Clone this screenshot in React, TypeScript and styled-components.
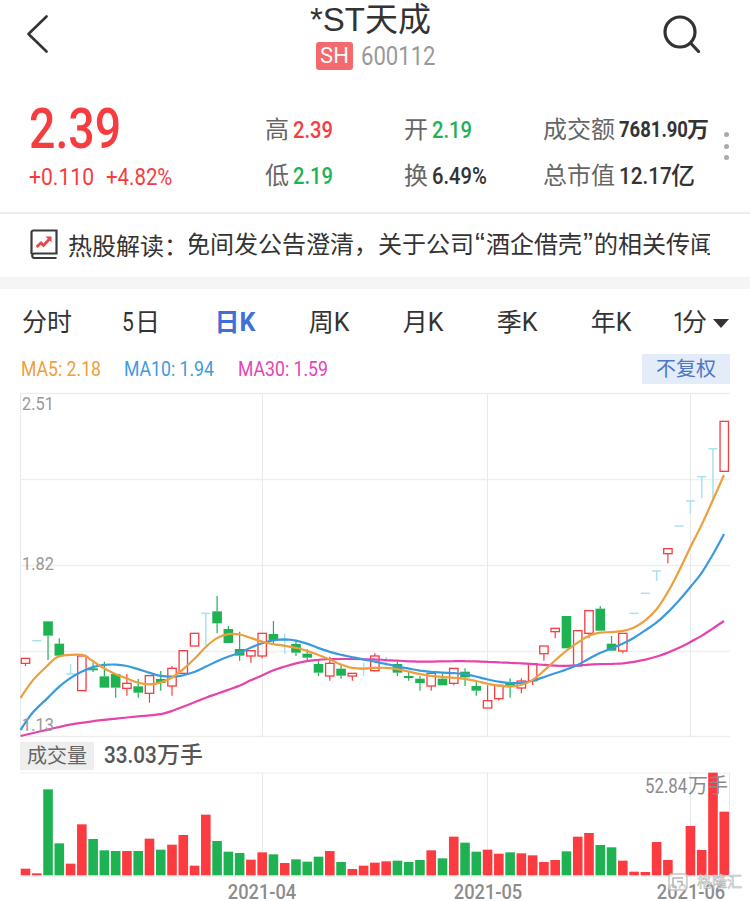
import { createGlobalStyle, styled } from "styled-components";

const RED = "#f73c40";
const GREEN = "#1eb253";
const CYAN = "#a9e1ee";
const LINE = "#eeeeee";

const GlobalStyle = createGlobalStyle`
  html, body {
    margin: 0;
    padding: 0;
    background: #fff;
  }
  * {
    box-sizing: border-box;
  }
`;

const NUM_FONT = `Roboto, "Noto Sans CJK SC", sans-serif`;
const CJK_FONT = `Roboto, "Noto Sans CJK SC", sans-serif`;

// one candle: body top/bottom and wick top/bottom in page pixels
type Candle = { c: "r" | "g" | "c"; t: number; b: number; wt?: number; wb?: number };
type Pt = [number, number];

const z = (n: number) => 580 + n / 3;
const y5 = (n: number) => 400 + n / 3;

const candle = (c: Candle["c"], t: number, b: number, wt?: number, wb?: number, f = z): Candle => ({
  c,
  t: f(t),
  b: f(b),
  wt: wt === undefined ? undefined : f(wt),
  wb: wb === undefined ? undefined : f(wb),
});

const candles: Candle[] = [
  candle("r", 235, 250, undefined, 258),
  candle("c", 182, 183),
  candle("g", 124, 167, undefined, 240),
  candle("g", 191, 227, 175),
  candle("c", 282, 283, 252),
  candle("r", 228, 332),
  candle("g", 265, 271, 248, 276),
  candle("g", 289, 323, 245),
  candle("g", 282, 323, undefined, 353),
  candle("r", 310, 325, 282, 347),
  candle("g", 319, 338, 297, 353),
  candle("r", 287, 340, undefined, 368),
  candle("g", 297, 309, 273, 332),
  candle("r", 265, 318, 258, 347),
  candle("r", 212, 280),
  candle("r", 160, 198),
  candle("c", 100, 101, undefined, 195),
  candle("g", 94, 130, 48, 160),
  candle("g", 147, 189, 138),
  candle("g", 207, 227, 155, 242),
  candle("r", 212, 228, undefined, 248),
  candle("r", 160, 228, undefined, 235),
  candle("g", 162, 183, 123, 195),
  candle("c", 180, 181, 160, 222),
  candle("g", 192, 218, 180, 228),
  candle("g", 221, 233, 208, 245),
  candle("g", 252, 278, 237, 288),
  candle("r", 250, 288, 230, 302),
  candle("g", 266, 287, 252, 296),
  candle("r", 280, 288, undefined, 302),
  candle("c", 268, 269, 248, 288),
  candle("r", 228, 272, 220, 275),
  candle("c", 243, 244, 230, 258),
  candle("g", 252, 278, 245, 288),
  candle("g", 288, 294, 274, 302),
  candle("g", 296, 309, 288, 332),
  candle("r", 280, 318, undefined, 332),
  candle("g", 296, 316, 280),
  candle("r", 265, 310, undefined, 316),
  candle("g", 275, 292, 265, 318),
  candle("g", 318, 332, 304, 347),
  candle("r", 362, 384, 316),
  candle("r", 316, 356, undefined, 362),
  candle("g", 847, 857, 835, 893, y5),
  candle("r", 843, 864, 835, 880, y5),
  candle("r", 791, 842, undefined, 855, y5),
  candle("r", 738, 761, undefined, 782, y5),
  candle("r", 685, 695, undefined, 715, y5),
  candle("g", 648, 745, undefined, undefined, y5),
  candle("r", 692, 798, undefined, undefined, y5),
  candle("r", 632, 700, undefined, 715, y5),
  candle("g", 626, 692, 618, undefined, y5),
  candle("g", 731, 752, 708, undefined, y5),
  candle("r", 700, 753, undefined, 760, y5),
  candle("c", 640, 641, undefined, undefined, y5),
  candle("c", 580, 581, undefined, undefined, y5),
  candle("c", 513, 514, undefined, 543, y5),
  candle("r", 446, 461, undefined, 490, y5),
  candle("c", 378, 379, undefined, undefined, y5),
  candle("c", 303, 304, undefined, 340, y5),
  candle("c", 230, 231, undefined, 295, y5),
  candle("c", 146, 147, undefined, 297, y5),
  candle("r", 64, 214, undefined, undefined, y5),
];

const volumeTops: [string, number][] = [
  ["r", 386], ["r", 400], ["g", 148], ["g", 310], ["r", 371], ["r", 253], ["g", 297], ["g", 331],
  ["g", 333], ["r", 333], ["g", 333], ["r", 296], ["g", 329], ["r", 314], ["r", 285], ["r", 377],
  ["r", 224], ["g", 303], ["g", 335], ["g", 339], ["r", 359], ["r", 337], ["g", 343], ["r", 369],
  ["g", 358], ["g", 365], ["g", 350], ["r", 333], ["g", 366], ["r", 387], ["r", 377], ["r", 368],
  ["r", 364], ["g", 362], ["g", 366], ["g", 360], ["r", 331], ["g", 355], ["r", 290], ["g", 308],
  ["g", 335], ["r", 329], ["r", 341], ["g", 337], ["r", 340], ["r", 346], ["r", 366], ["r", 360],
  ["g", 334], ["r", 290], ["r", 279], ["g", 315], ["g", 322], ["r", 362], ["r", 395], ["r", 396],
  ["r", 306], ["r", 360], ["r", 406], ["r", 258], ["r", 330], ["r", 98], ["r", 215],
];

const maOrange: Pt[] = [
  [20.5, 698], [33, 680], [48, 660], [59, 653], [82, 652], [90, 657], [100, 667], [113, 674], [127, 678],
  [138, 685], [150, 686], [161, 684], [172, 678], [183, 673], [195, 658], [206, 645], [217, 635], [228, 632],
  [240, 633], [250, 637], [262, 643], [273, 645], [285, 645], [296, 647], [307, 651], [318, 654], [330, 659],
  [341, 666], [352, 669], [363, 670], [375, 667], [386, 667], [397, 668], [409, 672], [420, 675], [431, 676],
  [442, 677], [454, 678], [465, 678], [476, 680], [488, 685], [500, 686], [510, 688], [521, 687], [533, 682],
  [544, 672], [555, 658], [566, 652], [578, 642], [589, 633], [600, 630], [612, 634], [623, 632], [634, 628],
  [645, 624], [657, 612], [668, 593], [679, 573], [690, 547], [702, 525], [713, 500], [724, 475],
];

const maBlue: Pt[] = [
  [20.5, 730], [33, 710], [48, 695], [59, 686], [70, 678], [82, 670], [93, 666], [104, 664], [116, 664], [127, 665],
  [138, 668], [150, 674], [161, 677], [172, 678], [183, 676], [195, 673], [206, 667], [217, 660], [228, 656],
  [240, 654], [250, 648], [262, 642], [273, 639], [285, 639], [296, 639], [307, 643], [318, 648], [330, 653],
  [341, 655], [352, 657], [363, 659], [375, 662], [386, 664], [397, 666], [409, 669], [420, 671], [431, 672],
  [442, 673], [454, 673], [465, 673], [476, 676], [488, 680], [500, 683], [510, 683], [521, 684], [533, 682],
  [544, 677], [555, 672], [566, 671], [578, 666], [589, 658], [600, 652], [612, 648], [623, 645], [634, 638],
  [645, 631], [657, 623], [668, 613], [679, 601], [690, 588], [702, 575], [713, 555], [724, 534],
];

const maPink: Pt[] = [
  [20.5, 736], [48, 728], [70, 724], [93, 721], [116, 718], [138, 717], [161, 714], [172, 712], [183, 707], [195, 702],
  [206, 697], [217, 694], [228, 690], [240, 686], [250, 681], [262, 675], [273, 670], [285, 666], [296, 663], [307, 661],
  [318, 659], [330, 659], [341, 659], [352, 659], [363, 659], [375, 659], [386, 660], [397, 661], [409, 661], [420, 662],
  [431, 662], [442, 661], [454, 661], [465, 661], [476, 661], [488, 662], [500, 662], [510, 663], [521, 663], [533, 664],
  [544, 665], [555, 666], [566, 666], [578, 666], [589, 664], [600, 664], [612, 664], [623, 664], [634, 662],
  [645, 660], [657, 657], [668, 653], [679, 648], [690, 643], [702, 636], [713, 628], [724, 621],
];

const xAt = (i: number) => 25.5 + 11.27 * i;

// read-off points are rounded to a pixel, so take the kinks out first
const relax = (pts: Pt[]): Pt[] =>
  pts.map((p, i) => {
    if (i === 0 || i === pts.length - 1) return p;
    return [p[0], (pts[i - 1][1] + 2 * p[1] + pts[i + 1][1]) / 4] as Pt;
  });

const smooth = (raw: Pt[]) => {
  const pts = relax(relax(raw));
  let d = `M${pts[0][0]} ${pts[0][1]}`;
  for (let i = 0; i < pts.length - 1; i++) {
    const p0 = pts[i - 1] || pts[i];
    const p1 = pts[i];
    const p2 = pts[i + 1];
    const p3 = pts[i + 2] || p2;
    const c1x = p1[0] + (p2[0] - p0[0]) / 6;
    const c1y = p1[1] + (p2[1] - p0[1]) / 6;
    const c2x = p2[0] - (p3[0] - p1[0]) / 6;
    const c2y = p2[1] - (p3[1] - p1[1]) / 6;
    d += ` C${c1x.toFixed(1)} ${c1y.toFixed(1)} ${c2x.toFixed(1)} ${c2y.toFixed(1)} ${p2[0]} ${p2[1].toFixed(1)}`;
  }
  return d;
};

const CandleMark = ({ d, i }: { d: Candle; i: number }) => {
  const x = xAt(i);
  if (d.c === "c") {
    return (
      <g stroke={CYAN} strokeWidth={1.5}>
        <line x1={x - 4.5} x2={x + 4.5} y1={d.t} y2={d.t} />
        {d.wt !== undefined && <line x1={x} x2={x} y1={d.wt} y2={d.t} />}
        {d.wb !== undefined && <line x1={x} x2={x} y1={d.t} y2={d.wb} />}
      </g>
    );
  }
  const color = d.c === "r" ? RED : GREEN;
  return (
    <g>
      {d.wt !== undefined && <line x1={x} x2={x} y1={d.wt} y2={d.t} stroke={color} strokeWidth={1.2} />}
      {d.wb !== undefined && <line x1={x} x2={x} y1={d.b} y2={d.wb} stroke={color} strokeWidth={1.2} />}
      {d.c === "r" ? (
        <rect x={x - 4.2} y={d.t} width={8.4} height={d.b - d.t} fill="none" stroke={color} strokeWidth={1.3} />
      ) : (
        <rect x={x - 4.8} y={d.t} width={9.6} height={d.b - d.t} fill={color} />
      )}
    </g>
  );
};

const BackIcon = () => (
  <svg width="24" height="38" viewBox="0 0 24 38" fill="none">
    <path d="M20.5 1.5 2.5 19l18 17.5" stroke="#333" strokeWidth="2.6" strokeLinecap="round" strokeLinejoin="round" />
  </svg>
);

const SearchIcon = () => (
  <svg width="38" height="38" viewBox="0 0 38 38" fill="none">
    <circle cx="17" cy="17" r="15" stroke="#333" strokeWidth="3.2" />
    <path d="M28 28.5l7.5 8" stroke="#333" strokeWidth="3.2" strokeLinecap="round" />
  </svg>
);

const BookIcon = () => (
  <svg width="28" height="30" viewBox="0 0 28 30" fill="none">
    <path d="M1.5 25V3.5a2 2 0 0 1 2-2H26.500V24.500H4a2.300 2.300 0 0 0 0 4.500H26.500" stroke="#3a3a3a" strokeWidth="2.200" />
    <path d="M6.500 18l4.500-4 2.500 2.500 5.500-6" stroke="#e8474b" strokeWidth="2.800" />
    <path d="M15.500 7.500h6v6z" fill="#e8474b" />
  </svg>
);

const App = () => {
  return (
    <Page>
      <GlobalStyle />
      <Header>
        <BackIcon />
        <S.TitleBlock>
          <S.Title>*ST天成</S.Title>
          <S.CodeRow>
            <S.Market>SH</S.Market>
            <S.Code $w={74} $s={0.85}>
              600112
            </S.Code>
          </S.CodeRow>
        </S.TitleBlock>
        <S.SearchSlot>
          <SearchIcon />
        </S.SearchSlot>
      </Header>

      <Quote>
        <S.PriceBlock>
          <S.Price $w={92} $s={0.83}>
            2.39
          </S.Price>
          <S.Change>
            <Narrow $w={65} $s={0.88}>
              +0.110
            </Narrow>
            <Narrow $w={66} $s={0.85}>
              +4.82%
            </Narrow>
          </S.Change>
        </S.PriceBlock>
        <S.Stats>
          <S.Stat>
            <S.StatLabel>高</S.StatLabel>
            <S.StatValue $color={RED}>
              <Narrow $w={39}>2.39</Narrow>
            </S.StatValue>
          </S.Stat>
          <S.Stat>
            <S.StatLabel>开</S.StatLabel>
            <S.StatValue $color={GREEN}>
              <Narrow $w={39}>2.19</Narrow>
            </S.StatValue>
          </S.Stat>
          <S.Stat>
            <S.StatLabel>成交额</S.StatLabel>
            <S.StatValue $color="#333" $small>
              <Narrow $w={68}>7681.90</Narrow>万
            </S.StatValue>
          </S.Stat>
          <S.Stat>
            <S.StatLabel>低</S.StatLabel>
            <S.StatValue $color={GREEN}>
              <Narrow $w={39}>2.19</Narrow>
            </S.StatValue>
          </S.Stat>
          <S.Stat>
            <S.StatLabel>换</S.StatLabel>
            <S.StatValue $color="#333">
              <Narrow $w={52}>6.49%</Narrow>
            </S.StatValue>
          </S.Stat>
          <S.Stat>
            <S.StatLabel>总市值</S.StatLabel>
            <S.StatValue $color="#333">
              <Narrow $w={52} $s={0.86}>12.17</Narrow>亿
            </S.StatValue>
          </S.Stat>
        </S.Stats>
        <S.Dots>
          <i />
          <i />
          <i />
        </S.Dots>
      </Quote>

      <Notice>
        <BookIcon />
        <S.NoticeLabel>热股解读：</S.NoticeLabel>
        <S.NoticeClip>
          <S.NoticeText>
            免间发公告澄清，关于公司<S.Mark>“</S.Mark>酒企借壳<S.Mark>”</S.Mark>的相关传闻
          </S.NoticeText>
        </S.NoticeClip>
      </Notice>
      <Strip />

      <Tabs>
        <S.Tab>分时</S.Tab>
        <S.Tab>
          <Narrow $w={13}>5</Narrow>日
        </S.Tab>
        <S.Tab $active>日K</S.Tab>
        <S.Tab>周K</S.Tab>
        <S.Tab>月K</S.Tab>
        <S.Tab>季K</S.Tab>
        <S.Tab>年K</S.Tab>
        <S.Tab $nudge={-4}>
          <Narrow $w={9}>1</Narrow>分<S.Caret />
        </S.Tab>
      </Tabs>

      <MaRow>
        <S.MaItems>
          <S.Ma $color="#eda03c" $w={79} $s={0.84}>
            MA5: 2.18
          </S.Ma>
          <S.Ma $color="#3c9be2" $w={90} $s={0.84}>
            MA10: 1.94
          </S.Ma>
          <S.Ma $color="#e444b4" $w={89} $s={0.84}>
            MA30: 1.59
          </S.Ma>
        </S.MaItems>
        <S.Adjust>不复权</S.Adjust>
      </MaRow>

      <ChartBox>
        <S.ChartSvg width="750" height="348" viewBox="0 390 750 348">
          {[393.5, 479.5, 565.5, 651.5, 736.5].map((y) => (
            <line key={y} x1="20" x2="730" y1={y} y2={y} stroke={LINE} strokeWidth="1.5" />
          ))}
          {[20.5, 262.5, 487.5, 690.5].map((x) => (
            <line key={x} x1={x} x2={x} y1="393" y2="737" stroke="#e6e9ee" strokeWidth="1" />
          ))}
          {candles.map((d, i) => (
            <CandleMark key={i} d={d} i={i} />
          ))}
          <path d={smooth(maPink)} fill="none" stroke="#e643ad" strokeWidth="2.2" />
          <path d={smooth(maBlue)} fill="none" stroke="#3a9ade" strokeWidth="2.2" />
          <path d={smooth(maOrange)} fill="none" stroke="#ec9f3c" strokeWidth="2.2" />
        </S.ChartSvg>
        <S.PriceLabel $top={3}>2.51</S.PriceLabel>
        <S.PriceLabel $top={163}>1.82</S.PriceLabel>
        <S.PriceLabel $top={324}>1.13</S.PriceLabel>
      </ChartBox>

      <VolumeHead>
        <S.VolumeTag>成交量</S.VolumeTag>
        <S.VolumeValue>
          <Narrow $w={53} $s={0.9}>33.03</Narrow>万手
        </S.VolumeValue>
      </VolumeHead>

      <ChartBox>
        <S.ChartSvg width="750" height="106" viewBox="0 772 750 106">
          <line x1="20" x2="730" y1="773" y2="773" stroke={LINE} strokeWidth="1" />
          <line x1="20" x2="730" y1="876.5" y2="876.5" stroke={LINE} strokeWidth="1" />
          {[262.5, 487.5, 690.5, 729.5].map((x) => (
            <line key={x} x1={x} x2={x} y1="773" y2="876" stroke="#e6e9ee" strokeWidth="1" />
          ))}
          {volumeTops.map(([c, top], i) => (
            <rect
              key={i}
              x={xAt(i) - 4.8}
              y={740 + top / 3}
              width={9.6}
              height={(406 - top) / 3}
              fill={c === "r" ? "#fb3b3f" : GREEN}
            />
          ))}
        </S.ChartSvg>
        <S.MaxVolume>
          <Narrow $w={43}>52.84</Narrow>万手
        </S.MaxVolume>
      </ChartBox>

      <Dates>
        <S.DateText $center={262}>2021-04</S.DateText>
        <S.DateText $center={487.5}>2021-05</S.DateText>
        <S.DateText $center={690.5}>2021-06</S.DateText>
      </Dates>

      <S.Watermark>
        <svg width="20" height="18" viewBox="0 0 20 18" fill="none">
          <rect x="1" y="1" width="18" height="16" rx="3" fill="#ffffffa0" stroke="#c4c4c4" strokeWidth="1.4" />
          <path d="M15 5H5v9h4M9 8.500h5v4" stroke="#b4b4b4" strokeWidth="1.500" />
        </svg>
        <span>格隆汇</span>
      </S.Watermark>
    </Page>
  );
};

export default App;

// the app's number face is much narrower than anything installed,
// so $w is the room taken in the row and $s squeezes the glyphs into it
const Narrow = styled.span<{ $w: number; $s?: number }>`
  display: inline-block;
  width: ${(p) => p.$w}px;
  flex: none;
  white-space: nowrap;
  transform: scaleX(${(p) => p.$s ?? 0.84});
  transform-origin: left center;
`;

const Page = styled.div`
  position: relative;
  width: 750px;
  height: 901px;
  overflow: hidden;
  background: #fff;
  font-family: ${CJK_FONT};
`;

const Header = styled.header`
  display: flex;
  align-items: flex-start;
  height: 78px;
  padding: 15px 49px 0 26px;
`;

const Quote = styled.section`
  position: relative;
  display: flex;
  height: 136px;
  padding: 26px 0 0 29px;
  border-bottom: 2px solid #ececec;
`;

const Notice = styled.div`
  display: flex;
  align-items: center;
  height: 63px;
  padding: 0 0 3px 30px;
`;

const Strip = styled.div`
  height: 12px;
  background: #f5f5f5;
`;

const Tabs = styled.nav`
  display: flex;
  height: 56px;
  padding-top: 16px;
`;

const MaRow = styled.div`
  display: flex;
  justify-content: space-between;
  align-items: center;
  height: 45px;
  padding: 3px 20px 0 21px;
`;

const ChartBox = styled.div`
  position: relative;
`;

const VolumeHead = styled.div`
  display: flex;
  align-items: center;
  gap: 10px;
  height: 34px;
  padding: 1px 0 0 20px;
`;

const Dates = styled.div`
  position: relative;
  height: 23px;
`;

const S = {
  TitleBlock: styled.div`
    display: flex;
    flex-direction: column;
    align-items: flex-start;
    margin: -15px 0 0 260px;
  `,

  Title: styled.div`
    font-size: 33px;
    line-height: 40px;
    color: #333;
    white-space: nowrap;
    font-family: "Liberation Sans", "Noto Sans CJK SC", sans-serif;
  `,

  CodeRow: styled.div`
    display: flex;
    align-items: center;
    gap: 8px;
    margin: 2px 0 0 6px;
  `,

  Market: styled.span`
    width: 37px;
    height: 28px;
    border-radius: 3px;
    background: #f46a6c;
    color: #fff;
    font: 22px/28px ${NUM_FONT};
    text-align: center;
  `,

  Code: styled(Narrow)`
    color: #999;
    font: 26px/28px ${NUM_FONT};
  `,

  SearchSlot: styled.div`
    display: flex;
    margin-left: auto;
  `,

  PriceBlock: styled.div`
    width: 236px;
    flex: none;
  `,

  Price: styled(Narrow)`
    display: block;
    color: ${RED};
    font: 500 56px/50px ${NUM_FONT};
  `,

  Change: styled.div`
    display: flex;
    gap: 12px;
    margin-top: 9px;
    color: ${RED};
    font: 24px/28px ${NUM_FONT};
  `,

  Stats: styled.div`
    display: grid;
    grid-template-columns: 139px 139px 1fr;
    grid-auto-rows: 46px;
    padding-top: 3px;
  `,

  Stat: styled.div`
    display: flex;
    align-items: center;
    gap: 4px;
    white-space: nowrap;
  `,

  StatLabel: styled.span`
    color: #666;
    font-size: 24px;
    line-height: 30px;
  `,

  StatValue: styled.span<{ $color: string; $small?: boolean }>`
    color: ${(p) => p.$color};
    font: ${(p) => (p.$small ? "700 22px" : "500 24px")}/30px ${NUM_FONT};
  `,

  Dots: styled.div`
    position: absolute;
    top: 54px;
    right: 21px;
    display: flex;
    flex-direction: column;
    gap: 6.500px;

    i {
      display: block;
      width: 5px;
      height: 5px;
      border-radius: 50%;
      background: #aaa;
    }
  `,

  NoticeLabel: styled.span`
    margin-left: 10px;
    color: #333;
    font-size: 24px;
    white-space: nowrap;
    width: 121px;
    flex: none;
  `,

  NoticeClip: styled.div`
    width: 521px;
    overflow: hidden;
  `,

  NoticeText: styled.div`
    color: #333;
    font-size: 24px;
    line-height: 34px;
    white-space: nowrap;
    margin-left: -3px;
  `,

  Mark: styled.span`
    margin-left: 1px;
    font-family: "Liberation Sans", sans-serif;
    font-size: 30px;
    letter-spacing: 1px;
  `,

  Tab: styled.span<{ $active?: boolean; $nudge?: number }>`
    display: flex;
    justify-content: center;
    align-items: flex-start;
    width: 94px;
    flex: none;
    margin-left: ${(p) => p.$nudge ?? 0}px;
    color: ${(p) => (p.$active ? "#3f6fd8" : "#333")};
    font-size: 25px;
    line-height: 36px;
    font-weight: ${(p) => (p.$active ? 700 : 400)};
    white-space: nowrap;
  `,

  Caret: styled.i`
    margin: 14px 0 0 6px;
    width: 0;
    height: 0;
    border-left: 8px solid transparent;
    border-right: 8px solid transparent;
    border-top: 9px solid #333;
  `,

  MaItems: styled.div`
    display: flex;
    gap: 24px;
  `,

  Ma: styled(Narrow)<{ $color: string }>`
    color: ${(p) => p.$color};
    font: 21px/24px ${NUM_FONT};
  `,

  Adjust: styled.span`
    width: 88px;
    height: 30px;
    background: #e3ecf8;
    color: #4c78c8;
    font-size: 20px;
    line-height: 30px;
    text-align: center;
  `,

  ChartSvg: styled.svg`
    display: block;
  `,

  PriceLabel: styled.span<{ $top: number }>`
    position: absolute;
    left: 22px;
    top: ${(p) => p.$top}px;
    color: #999;
    font: 19px/22px ${NUM_FONT};
    transform: scaleX(0.86);
    transform-origin: left center;
  `,

  VolumeTag: styled.span`
    width: 74px;
    height: 28px;
    background: #eeeeee;
    color: #666;
    font-size: 20px;
    line-height: 28px;
    text-align: center;
  `,

  VolumeValue: styled.span`
    color: #555;
    font: 500 23px/28px ${NUM_FONT};
    white-space: nowrap;
  `,

  MaxVolume: styled.span`
    position: absolute;
    top: 2px;
    right: 22px;
    color: #8a8a8a;
    font: 20px/24px ${NUM_FONT};
    white-space: nowrap;
  `,

  DateText: styled.span<{ $center: number }>`
    position: absolute;
    left: ${(p) => p.$center}px;
    top: 3px;
    transform: translateX(-50%) scaleX(0.87);
    color: #8c8c8c;
    font: 500 21px/22px ${NUM_FONT};
    white-space: nowrap;
  `,

  Watermark: styled.div`
    position: absolute;
    right: 8px;
    top: 873px;
    display: flex;
    align-items: center;
    gap: 9px;
    color: #ffffffd0;
    -webkit-text-stroke: 0.6px #b5b5b5;
    font-size: 15px;
    line-height: 18px;
  `,
};
